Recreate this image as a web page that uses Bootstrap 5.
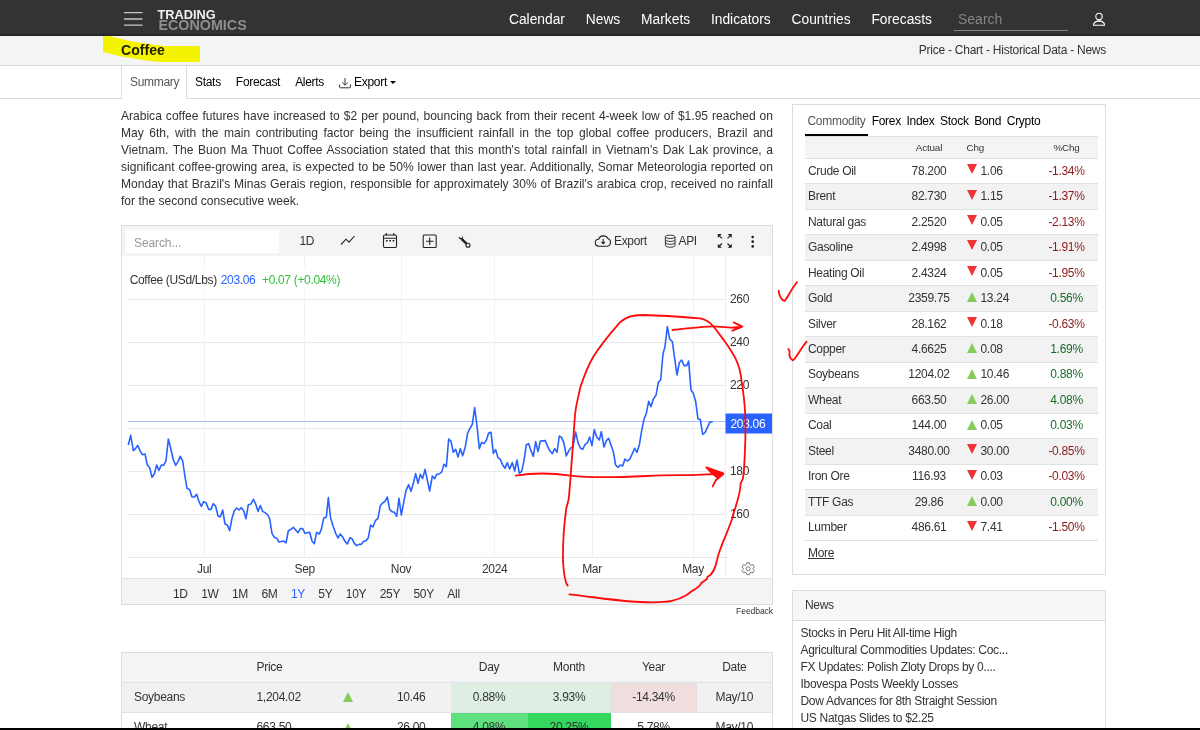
<!DOCTYPE html>
<html lang="en">
<head>
<meta charset="utf-8">
<meta name="viewport" content="width=device-width, initial-scale=1">
<title>Coffee - Trading Economics</title>
<link rel="stylesheet" href="https://cdn.jsdelivr.net/npm/bootstrap@5.3.0/dist/css/bootstrap.min.css">
<style>
body{font-family:"Liberation Sans",Arial,sans-serif;font-size:12px;letter-spacing:-.3px;line-height:17px;color:#333;background:#fff}
a{color:inherit;text-decoration:none}
.page{height:730px;border-bottom:2px solid #000}
.wrap{width:985px;margin-left:121px}
.topbar{height:36px;background:#333;border-bottom:2px solid #262626}
.brand-a,.brand-b{font-weight:bold;display:block;white-space:nowrap;letter-spacing:0}
.brand-a{font-size:12.8px;line-height:11px;color:#f0f0f0}
.brand-b{font-size:14.3px;line-height:11px;color:#8e8e8e;margin-left:1px}
.menu{gap:20.8px;font-size:13.8px;color:#fff;margin-left:auto;letter-spacing:0}
.find{width:114px;height:25px;border-bottom:1px solid #858585;padding:0 4px;font-size:14px;letter-spacing:0;line-height:27px;color:#858585;margin:3px 24px 0 22px}
.subbar{height:30px;background:#f4f4f4;border-bottom:1px solid #d9d9d9}
.subbar h1{font-size:14.1px;letter-spacing:0;font-weight:bold;line-height:17px;color:#222}
.tabbar{height:33px;border-bottom:1px solid #d9d9d9}
.tabbar a{color:#000}
.tabbar .sel{height:33px;width:66px;padding-left:8px;border:1px solid #ddd;border-width:0 1px;background:#fff;color:#555}
.caret{border:3px solid transparent;border-top:3px solid #000;border-bottom:0;margin-left:3px}
.main-col{width:652px}
.intro{font-size:12.05px;letter-spacing:0;line-height:17.1px;text-align:justify;margin:9px 0 0;height:117px}
.chartbox{height:380px;border:1px solid #dcdcdc}
.tools{height:30px;background:#f4f4f4;position:relative}
.tools .box{width:153px;height:23px;background:#fff;color:#999;letter-spacing:-.1px;margin-left:4px;padding:5px 0 0 8px}
.ranges{height:26px;background:#f4f4f4;border-top:1px solid #e2e2e2;padding-left:51px}
.feedback{font-size:8.6px;letter-spacing:-.1px;line-height:13px;text-align:right;height:47px}
.grid-table{table-layout:fixed;border-collapse:collapse;margin:0}
.grid-table td,.grid-table th{font-weight:normal;padding:0;vertical-align:middle;white-space:nowrap}
.peers{width:651px;border:1px solid #dcdcdc;border-bottom:0}
.peers tr{height:30px}.peers tr+tr{border-top:1px solid #dee2e6}
.side{width:314px;margin-left:19px}
.market{height:471px;border:1px solid #dcdcdc;margin-top:5px;padding:0 7px 0 11.5px}
.market nav{height:31px;gap:5.7px;padding-top:1px}
.market nav a{color:#000;line-height:31px;height:30px}
.market nav .sel{color:#555;border-bottom:2px solid #000;padding:0 2.5px 0 3px;margin-right:-2px;height:30px}
.quotes{width:293px}
.quotes thead tr{height:22px;background:#f4f4f4;font-size:9.8px;letter-spacing:-.15px;line-height:14px;border:1px solid #dee2e6;border-width:1px 0}
.quotes tbody tr{height:25.47px;border-bottom:1px solid #dee2e6}
.quotes tbody tr:nth-child(even){background:#f2f2f2}
.dn{color:#8b1a1a}.up{color:#1a6b2a}
.tri{display:inline-block;border:5.3px solid transparent;vertical-align:middle}
.tri.u{border-bottom:10px solid #86cc5a;border-top:0;margin-top:-3px}
.tri.d{border-top:10px solid #ee3434;border-bottom:0;margin-top:-5px}
.peers .tri.u{margin-top:-1px}
.quotes .tri{margin-right:4px}
.newsbox{border:1px solid #dcdcdc;border-bottom:0;margin-top:15px;height:150px}
.newsbox h2{font-size:12px;line-height:29px;height:30px;margin:0;padding-left:12px;background:#f7f7f7;border-bottom:1px solid #d9d9d9}
.newsbox a{display:block;padding-left:7.5px;line-height:17.15px}
.ink{position:absolute;left:0;top:0;pointer-events:none}
.marker{mix-blend-mode:multiply}
text{font-family:"Liberation Sans",Arial,sans-serif;font-size:12px;letter-spacing:-.33px;fill:#333}
</style>
</head>
<body>
<div class="page position-relative overflow-hidden">
<header class="topbar">
  <div class="wrap d-flex align-items-center h-100">
    <svg width="20" height="16" viewBox="0 0 20 16" style="margin:4px 0 0 3px" stroke="#c8c8c8" stroke-width="1.3"><path d="M0 1.7h18.500M0 8h18.500M0 14.200h18.500"/></svg>
    <a href="#" style="margin:6px 0 0 13.500px"><span class="brand-a">TRADING</span><span class="brand-b">ECONOMICS</span></a>
    <nav class="menu d-flex pt-1"><a href="#">Calendar</a><a href="#">News</a><a href="#">Markets</a><a href="#">Indicators</a><a href="#">Countries</a><a href="#">Forecasts</a></nav>
    <div class="find">Search</div>
    <svg width="14" height="15" viewBox="0 0 14 15" class="mt-1" fill="none" stroke="#fff" stroke-width="1.1"><circle cx="7" cy="4.500" r="3.200"/><path d="M1.500 13.200C1.500 10.200 4 9.100 7 9.100S12.500 10.200 12.500 13.200ZM6 7.800v1.300M8 7.800v1.300"/></svg>
  </div>
</header>
<div class="subbar"><div class="wrap d-flex justify-content-between align-items-center h-100">
  <h1 class="mb-0">Coffee</h1><span style="letter-spacing:-.25px">Price - Chart - Historical Data - News</span>
</div></div>
<div class="tabbar"><nav class="wrap d-flex align-items-center">
  <a href="#" class="sel d-flex align-items-center">Summary</a>
  <a href="#" style="margin-left:8px">Stats</a><a href="#" style="margin-left:15px">Forecast</a><a href="#" style="margin-left:15px">Alerts</a>
  <a href="#" class="d-flex align-items-center" style="margin-left:15px"><svg width="12" height="12" viewBox="0 0 12 12" fill="none" stroke="#333" stroke-width="1" style="margin-right:3px"><path d="M6 1v7M3.300 5.500 6 8.200 8.700 5.500M.6 7.500v2.500q0 .8.8.8h9.200q.8 0 .8-.8V7.500"/></svg>Export<span class="caret"></span></a>
</nav></div>

<div class="wrap d-flex align-items-start">
<main class="main-col flex-shrink-0">
  <p class="intro">Arabica coffee futures have increased to $2 per pound, bouncing back from their recent 4-week low of $1.95 reached on May 6th, with the main contributing factor being the insufficient rainfall in the top global coffee producers, Brazil and Vietnam. The Buon Ma Thuot Coffee Association stated that this month's total rainfall in Vietnam's Dak Lak province, a significant coffee-growing area, is expected to be 50% lower than last year. Additionally, Somar Meteorologia reported on Monday that Brazil's Minas Gerais region, responsible for approximately 30% of Brazil's arabica crop, received no rainfall for the second consecutive week.</p>
  <section class="chartbox">
    <div class="tools d-flex align-items-center">
      <div class="box">Search...</div>
      <svg class="ink" width="650" height="30" viewBox="122 226 650 30" fill="none" stroke="#222" stroke-width="1.1">
        <text x="299.500" y="245" stroke="none">1D</text>
        <path d="M341 244.500 346 239.200 349 242.200 354.500 236"/>
        <rect x="383.500" y="235" width="13" height="12.500" rx="1.200"/><path d="M383.500 238.300h13M386.300 233v2.500M393.800 233v2.500"/><path d="M386 240.700h9" stroke-width="1.500" stroke-dasharray="1.700 1.600"/>
        <rect x="423.200" y="235" width="13" height="12.500" rx="1"/><path d="M429.700 237.500v7.500M426 241.200h7.500"/>
        <path d="M461.500 238.800 467.500 244.600" stroke-width="2.500"/><path d="M458.300 237.300a2.900 2.900 0 0 0 4.700 1.400 2.900 2.900 0 0 0-.7-3.200l.2 2-1.500.7-1.200-1z" fill="#222" stroke="none"/><circle cx="468" cy="245.300" r="2" fill="#f4f4f4"/>
        <path d="M599 246.200a3.500 3.500 0 0 1-.4-7 5.100 5.100 0 0 1 9.300-.6 4 4 0 0 1-.3 7.600zM603.200 239v4.500M601.500 242l1.700 1.800 1.700-1.800"/>
        <text x="614" y="245" stroke="none">Export</text>
        <g stroke-width=".9"><ellipse cx="670.200" cy="236.800" rx="4.800" ry="1.700"/><path d="M665.400 236.800v8.700c0 2.300 9.600 2.300 9.600 0v-8.700M665.400 239.700c0 2.300 9.600 2.300 9.600 0M665.400 242.600c0 2.300 9.600 2.300 9.600 0"/></g>
        <text x="678.500" y="245" stroke="none">API</text>
        <path d="M718.500 234.800 722 238.300M731 234.800 727.500 238.300M718.500 247 722 243.500M731 247 727.500 243.500"/><path fill="#222" stroke="none" d="M717.800 234h4l-4 4zM731.700 234h-4l4 4zM717.800 247.700h4l-4-4zM731.700 247.700h-4l4-4z"/>
        <g fill="#222" stroke="none"><circle cx="752.700" cy="237" r="1.350"/><circle cx="752.700" cy="241.700" r="1.350"/><circle cx="752.700" cy="246.400" r="1.350"/></g>
      </svg>
    </div>
    <svg class="d-block" width="650" height="322" viewBox="122 256 650 322">
      <g stroke="#e9e9e9"><path d="M128 299.500h597M128 342.500h597M128 385.500h597M128 428.500h597M128 471.500h597M128 514.500h597M128 557.500h600"/></g>
      <path stroke="#edf3f8" d="M204.500 256v301.500M304.500 256v301.500M401.500 256v301.500M494.500 256v301.500M592.500 256v301.500M693.500 256v301.500"/>
      <path stroke="#e9edf0" d="M725.500 256v322"/>
      <path d="M126 267h218v23H126z" fill="#fff"/>
      <text x="129.700" y="283.600">Coffee (USd/Lbs)</text><text x="220.700" y="283.600" style="fill:#2962ff">203.06</text><text x="262" y="283.600" style="fill:#32c13c">+0.07 (+0.04%)</text>
      <path d="M128 421.500h597" stroke="#a9b9fb"/>
      <polyline transform="translate(120 300) scale(.33333)" fill="none" stroke="#2962ff" stroke-width="4.800" stroke-linejoin="round" points="25,435 32,406 40,452 47,445 53,436 60,452 67,464 75,462 82,495 89,503 96,532 103,522 110,495 117,511 124,495 131,496 138,482 145,417 152,444 160,480 167,496 174,485 181,469 188,483 195,530 201,565 209,569 216,591 223,591 230,583 237,605 244,619 251,605 258,608 266,628 273,628 280,611 287,619 294,648 301,651 308,630 315,672 322,675 329,692 336,655 343,632 350,624 357,630 364,623 371,632 378,656 385,614 393,612 400,598 407,612 414,634 421,617 428,634 435,638 442,643 449,656 456,700 463,712 470,715 477,726 491,723 498,729 505,692 513,688 520,682 527,690 534,698 541,686 548,686 555,700 569,697 576,723 583,731 590,697 598,702 604,688 611,655 619,651 625,593 632,655 640,680 647,700 654,714 661,702 668,711 675,724 682,732 690,713 696,716 703,730 710,737 717,733 724,733 731,724 738,722 745,713 752,675 759,681 766,662 774,655 781,617 788,609 795,604 802,591 809,628 816,635 823,637 830,649 837,595 844,645 851,608 858,572 866,554 873,574 880,550 887,521 894,550 901,523 908,536 915,508 922,540 929,573 937,528 944,536 950,523 958,522 965,516 972,493 979,500 986,417 993,424 1000,457 1007,448 1014,471 1021,446 1028,467 1036,440 1043,399 1050,385 1057,373 1064,323 1071,378 1078,446 1085,427 1092,431 1099,421 1106,399 1113,397 1120,460 1127,449 1134,473 1141,478 1148,495 1155,505 1162,488 1169,507 1177,488 1184,513 1191,480 1198,520 1205,514 1212,482 1219,434 1226,431 1233,452 1240,469 1247,425 1254,455 1261,423 1276,422 1283,440 1290,453 1297,461 1304,446 1311,457 1318,408 1325,413 1332,430 1339,468 1346,453 1353,443 1359,441 1367,396 1374,428 1381,444 1388,448 1395,434 1403,427 1409,411 1416,437 1423,389 1430,411 1438,420 1444,395 1452,441 1459,422 1466,415 1473,435 1480,455 1487,495 1494,502 1501,495 1508,498 1515,477 1522,483 1529,478 1536,463 1544,445 1551,457 1558,435 1565,392 1572,358 1579,340 1586,304 1593,320 1600,297 1608,286 1615,247 1622,240 1629,162 1635,140 1642,80 1649,117 1657,125 1664,175 1671,225 1678,188 1685,180 1692,197 1700,197 1706,183 1713,270 1720,280 1727,305 1734,357 1741,358 1748,403 1755,398 1762,383 1769,367 1778,365"/>
      <text x="730" y="303">260</text><text x="730" y="346">240</text><text x="730" y="389">220</text><text x="730" y="475">180</text><text x="730" y="518">160</text>
      <path fill="#2962ff" d="M725.500 413.500h46.500v20h-46.500z"/><text x="730.500" y="428" style="fill:#fff">203.06</text>
      <g text-anchor="middle"><text x="204.300" y="572.500">Jul</text><text x="304.700" y="572.500">Sep</text><text x="401" y="572.500">Nov</text><text x="494.700" y="572.500">2024</text><text x="592" y="572.500">Mar</text><text x="693" y="572.500">May</text></g>
      <g fill="none" stroke="#777" transform="translate(748.200 568.700)"><circle r="2"/><path stroke-linejoin="round" d="M-1.300-6h2.600l.5 1.800 1.300.7 1.800-.5 1.300 2.200L4.900-.5v1l1.300 1.300L4.900 4l-1.800-.5-1.300.7L1.300 6h-2.600l-.5-1.800-1.300-.7L-4.900 4l-1.300-2.200L-4.900.5v-1l-1.300-1.300L-4.900-4l1.800.5 1.300-.7z"/></g>
    </svg>
    <nav class="ranges d-flex align-items-center" style="gap:13.400px;padding-top:5px"><a href="#">1D</a><a href="#">1W</a><a href="#">1M</a><a href="#">6M</a><a href="#" style="color:#2962ff">1Y</a><a href="#">5Y</a><a href="#">10Y</a><a href="#">25Y</a><a href="#">50Y</a><a href="#">All</a></nav>
  </section>
  <div class="feedback">Feedback</div>
  <table class="grid-table peers">
    <colgroup><col style="width:129px"><col style="width:70px"><col style="width:55px"><col style="width:75px"><col style="width:77px"><col style="width:83px"><col style="width:86px"><col style="width:76px"></colgroup>
    <tr style="background:#f4f4f4"><th></th><th style="padding-left:6px">Price</th><th></th><th></th><th class="text-center">Day</th><th class="text-center">Month</th><th class="text-center">Year</th><th class="text-center">Date</th></tr>
    <tr style="background:#f1f1f1"><td style="padding-left:12px">Soybeans</td><td style="padding-left:6px">1,204.02</td><td class="text-center"><i class="tri u"></i></td><td class="text-end" style="padding-right:25px">10.46</td><td class="text-center" style="background:#deeee2">0.88%</td><td class="text-center" style="background:#deeee2">3.93%</td><td class="text-center" style="background:#f0dede">-14.34%</td><td class="text-center">May/10</td></tr>
    <tr><td style="padding-left:12px">Wheat</td><td style="padding-left:6px">663.50</td><td class="text-center"><i class="tri u"></i></td><td class="text-end" style="padding-right:25px">26.00</td><td class="text-center" style="background:#5fe07e">4.08%</td><td class="text-center" style="background:#36d75f">20.25%</td><td class="text-center">5.78%</td><td class="text-center">May/10</td></tr>
  </table>
</main>
<aside class="side flex-shrink-0">
  <section class="market">
    <nav class="d-flex"><a href="#" class="sel">Commodity</a><a href="#">Forex</a><a href="#">Index</a><a href="#">Stock</a><a href="#">Bond</a><a href="#">Crypto</a></nav>
    <table class="grid-table quotes">
      <colgroup><col style="width:94px"><col style="width:61px"><col style="width:76px"><col style="width:62px"></colgroup>
      <thead><tr><th></th><th class="text-center">Actual</th><th style="padding-left:7px">Chg</th><th class="text-center">%Chg</th></tr></thead>
      <tbody id="quotes"></tbody>
    </table>
    <a href="#" class="d-inline-block text-decoration-underline" style="margin:4px 0 0 3.500px">More</a>
  </section>
  <section class="newsbox">
    <h2>News</h2>
    <div style="padding-top:3.500px"><a href="#">Stocks in Peru Hit All-time High</a><a href="#">Agricultural Commodities Updates: Coc...</a><a href="#">FX Updates: Polish Zloty Drops by 0....</a><a href="#">Ibovespa Posts Weekly Losses</a><a href="#">Dow Advances for 8th Straight Session</a><a href="#">US Natgas Slides to $2.25</a></div>
  </section>
</aside>
</div>

<!-- highlighter and pen notes drawn over the page -->
<svg class="ink marker" width="1200" height="728" viewBox="0 0 1200 728"><path fill="#ffff00" transform="translate(100 0) scale(.33333)" d="M9 108H30C70 120 120 130 195 138H300V186H180C120 180 60 170 9 155Z"/></svg>
<svg class="ink" width="1200" height="728" viewBox="0 0 1200 728" fill="none" stroke="#fe0b0b" stroke-linecap="round" stroke-linejoin="round">
  <g transform="translate(540 300) scale(.33333)" stroke-width="5.400">
    <path d="M83 857C74 845 71 820 69 780C68 700 74 660 79 625L86 598C92 540 98 440 105 345C108 310 114 300 120 265C133 225 145 195 160 170C185 130 200 112 240 67C262 47 285 45 315 45C360 46 430 51 480 55C510 60 520 78 555 125C580 160 600 190 605 245C617 320 617 360 616 420C614 470 614 500 609 535L602 550C601 590 585 620 575 660C560 705 540 740 531 780C526 800 527 808 512 824L503 830L500 838L483 850L480 856L465 868L459 871L440 885C410 903 385 907 340 907C260 908 180 893 88 883"/>
    <path d="M397 90C440 86 500 78 520 79L575 83Q590 82 607 80M581 67 607 80 577 92"/>
    <path d="M-73 527C-20 518 30 518 91 527C150 534 220 533 320 528C400 524 460 527 500 523L548 522M550 522 528 540 518 559"/>
    <path fill="#fe0b0b" d="M499 502 550 520 534 534 514 518Z"/>
  </g>
  <path transform="translate(770 100) scale(.33333)" stroke-width="5.400" d="M26 572C28 590 34 600 44 603C55 590 62 570 81 546"/>
  <path transform="translate(770 340) scale(.33333)" stroke-width="5.400" d="M55 27 59 34C57 45 58 55 68 61C80 55 88 30 110 5"/>
</svg>
</div>
<script>
const quotes = [["Crude Oil","78.200","1.06","-1.34%"],["Brent","82.730","1.15","-1.37%"],["Natural gas","2.2520","0.05","-2.13%"],["Gasoline","2.4998","0.05","-1.91%"],["Heating Oil","2.4324","0.05","-1.95%"],["Gold","2359.75","13.24","0.56%"],["Silver","28.162","0.18","-0.63%"],["Copper","4.6625","0.08","1.69%"],["Soybeans","1204.02","10.46","0.88%"],["Wheat","663.50","26.00","4.08%"],["Coal","144.00","0.05","0.03%"],["Steel","3480.00","30.00","-0.85%"],["Iron Ore","116.93","0.03","-0.03%"],["TTF Gas","29.86","0.00","0.00%"],["Lumber","486.61","7.41","-1.50%"]];
document.getElementById("quotes").innerHTML = quotes.map(([name, price, chg, pct]) => {
  const down = pct[0] === "-";
  return `<tr><td style="padding-left:3.500px">${name}</td><td class="text-center">${price}</td><td style="padding-left:7px"><i class="tri ${down ? "d" : "u"}"></i>${chg}</td><td class="text-center ${down ? "dn" : "up"}">${pct}</td></tr>`;
}).join("");
</script>
<script src="https://cdn.jsdelivr.net/npm/bootstrap@5.3.0/dist/js/bootstrap.bundle.min.js"></script>
</body>
</html>
